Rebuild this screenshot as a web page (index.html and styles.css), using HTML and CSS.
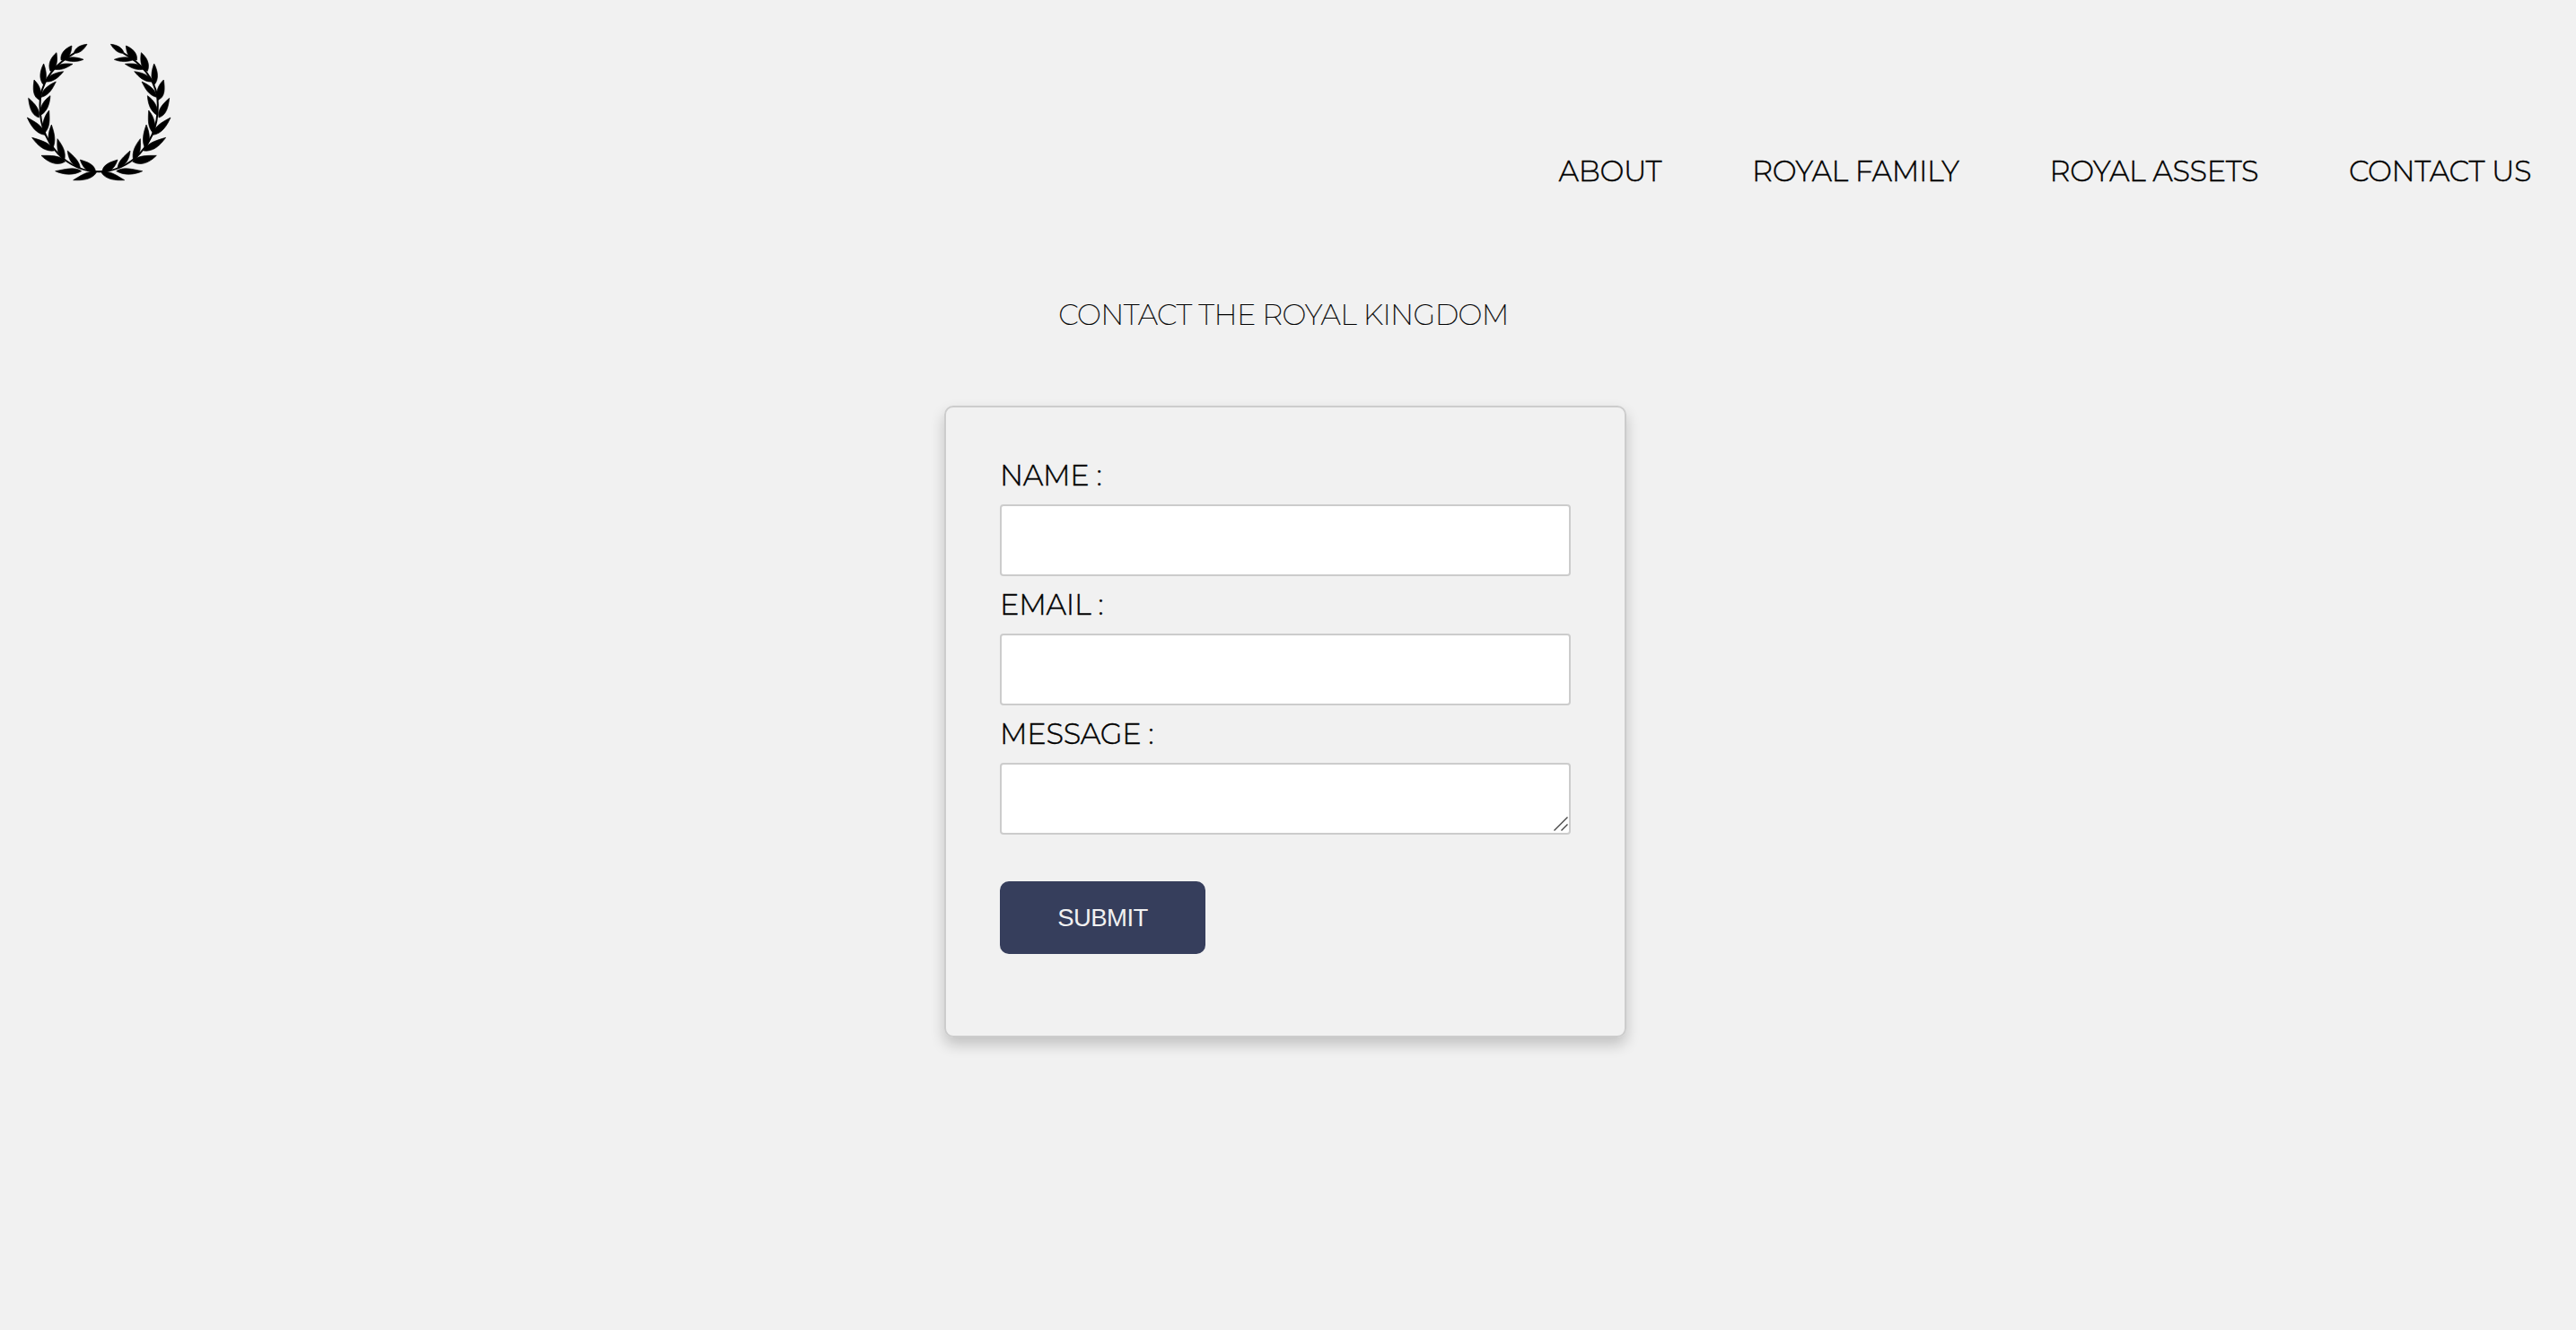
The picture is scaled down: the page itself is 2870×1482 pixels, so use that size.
FILE: index.html
```html
<!DOCTYPE html>
<html lang="en">
<head>
<meta charset="utf-8">
<title>Contact the Royal Kingdom</title>
<link rel="stylesheet" href="styles.css">
</head>
<body>
<header class="header">
  <svg class="logo" viewBox="0 0 660 600" role="img" aria-label="Laurel wreath">
    <defs>
      <g id="branch">
        <path class="stem" d="M248 118C200 145 150 190 135 262C128 340 145 400 195 455C230 490 270 514 331 514"/>
        <path d="M291 88C270 90 252 98 246 119C268 118 280 106 291 88Z"/>
        <path d="M240 93C220 100 200 118 204 141C228 142 238 120 240 93Z"/>
        <path d="M189 116C172 130 158 152 168 178C188 172 194 148 189 116Z"/>
        <path d="M146 153C134 175 128 205 146 224C158 205 156 180 146 153Z"/>
        <path d="M114 207C110 235 108 265 134 275C142 252 134 225 114 207Z"/>
        <path d="M95 268C98 295 104 325 130 333C136 308 118 288 95 268Z"/>
        <path d="M91 333C102 358 120 388 150 391C146 362 122 350 91 333Z"/>
        <path d="M107 400C125 425 148 448 181 444C172 420 142 410 107 400Z"/>
        <path d="M138 460C158 480 188 498 218 480C200 458 170 460 138 460Z"/>
        <path d="M185 512C210 524 245 528 272 512C250 496 218 506 185 512Z"/>
        <path d="M245 542C275 544 308 540 322 517C295 508 272 526 245 542Z"/>
        <path d="M279 139C258 130 230 128 212 139C235 148 258 148 279 139Z"/>
        <path d="M243 154C215 150 190 155 178 170C200 178 222 168 243 154Z"/>
        <path d="M212 179C185 182 160 192 150 213C178 216 196 198 212 179Z"/>
        <path d="M187 213C160 225 138 242 138 265C164 258 176 236 187 213Z"/>
        <path d="M168 260C146 275 130 300 136 325C158 312 166 288 168 260Z"/>
        <path d="M164 309C148 328 136 358 148 386C168 366 166 340 164 309Z"/>
        <path d="M172 357C160 385 156 415 176 436C188 412 182 385 172 357Z"/>
        <path d="M192 404C190 435 192 465 215 475C222 448 208 425 192 404Z"/>
        <path d="M226 444C228 470 240 495 268 502C266 478 246 462 226 444Z"/>
        <path d="M268 474C275 498 292 518 320 515C316 488 292 482 268 474Z"/>
      </g>
    </defs>
    <use href="#branch"/>
    <use href="#branch" transform="matrix(-1 0 0 1 661 0)"/>
  </svg>
  <nav class="nav">
    <a class="nav-link">ABOUT</a>
    <a class="nav-link">ROYAL FAMILY</a>
    <a class="nav-link">ROYAL ASSETS</a>
    <a class="nav-link">CONTACT US</a>
  </nav>
</header>
<main class="main">
  <h1 class="title">CONTACT THE ROYAL KINGDOM</h1>
  <form class="card">
    <label class="label" for="name">NAME :</label>
    <input class="field" id="name" type="text">
    <label class="label" for="email">EMAIL :</label>
    <input class="field" id="email" type="text">
    <label class="label" for="message">MESSAGE :</label>
    <div class="message">
      <textarea class="field" id="message"></textarea>
      <svg class="grip" viewBox="0 0 16 16"><path d="M0.5 15.5L15.5 0.5M8.5 15.5L15.5 8.5"/></svg>
    </div>
    <button class="submit" type="button">SUBMIT</button>
  </form>
</main>
</body>
</html>
```
FILE: styles.css
```css
* {
  box-sizing: border-box;
}

body {
  margin: 0;
  min-height: 100vh;
  background: #f1f1f1;
  color: #000;
  font: 300 32px/39px Montserrat, Lato, sans-serif;
}

.header {
  display: flex;
  justify-content: space-between;
  align-items: flex-end;
  height: 220px;
  padding: 0 50px 0 0;
}

.logo {
  width: 220px;
  height: 200px;
  stroke: #000;
  stroke-width: 2;
}

.stem {
  fill: none;
  stroke-width: 6;
}

.nav {
  display: flex;
  gap: 101px;
  padding-bottom: 10px;
}

.nav-link {
  color: #000;
  letter-spacing: -0.38px;
  -webkit-text-stroke: 0.4px #000;
}

.main {
  display: flex;
  flex-direction: column;
  align-items: center;
  padding: 111px 6px 0 0;
}

.title {
  margin: 0 4px 82px 0;
  font-size: 32px;
  font-weight: 200;
  letter-spacing: -0.6px;
  -webkit-text-stroke: 0.2px #000;
}

.card {
  display: flex;
  flex-direction: column;
  width: 760px;
  height: 704px;
  padding: 44px 60px 0;
  border: 2px solid #ccc;
  border-radius: 10px;
  box-shadow: 0 8px 16px rgba(0, 0, 0, 0.2);
}

.label {
  padding: 12px 0 13px;
  letter-spacing: -0.28px;
  -webkit-text-stroke: 0.4px #000;
}

.field {
  display: block;
  width: 636px;
  height: 80px;
  padding: 0 16px;
  border: 2px solid #ccc;
  border-radius: 4px;
  background: #fff;
  font: inherit;
  outline: none;
  resize: none;
}

.message {
  position: relative;
}

.grip {
  position: absolute;
  right: 3px;
  bottom: 4px;
  width: 16px;
  height: 16px;
  fill: none;
  stroke: #444;
  stroke-width: 1.4;
}

.submit {
  width: 229px;
  height: 81px;
  margin-top: 52px;
  padding: 0;
  border: 0;
  border-radius: 10px;
  background: #363e5c;
  color: #f1f1f1;
  font: 27.5px "Liberation Sans", Arial, sans-serif;
  letter-spacing: -0.6px;
}
```
